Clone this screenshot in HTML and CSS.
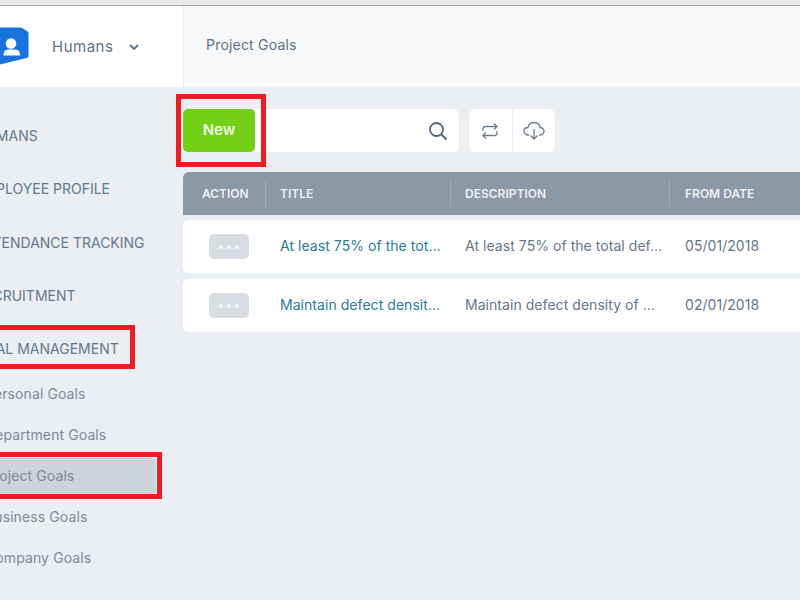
FILE: index.html
```html
<!DOCTYPE html>
<html lang="en">
<head>
<meta charset="utf-8">
<title>Project Goals</title>
<link rel="stylesheet" href="styles.css">
</head>
<body>
<div class="chrome"></div>
<header class="top">
  <div class="brand">
    <svg class="logo" width="30" height="44" viewBox="0 0 30 44"><path d="M0 2.500 H20.500 Q21.500 2.500 22.500 3.200 L27.500 6.500 Q28.500 7.200 28.500 8.500 V31.500 Q28.500 32.500 27.500 32.800 L0 39.500 Z" fill="#1a73dc"/><circle cx="11" cy="18.500" r="5.300" fill="#fff"/><path d="M3.500 30.500 Q3.500 24.500 8 24.500 H15.500 Q20 24.500 20 30.500 Z" fill="#fff"/></svg>
    <span class="brand-name">Humans</span>
    <svg class="chev" width="12" height="8" viewBox="0 0 12 8"><path d="M2 2 L6 6 L10 2" fill="none" stroke="#5d6f80" stroke-width="1.800"/></svg>
  </div>
  <div class="crumb">Project Goals</div>
</header>
<div class="body">
  <nav class="side">
    <a class="sec">HUMANS</a>
    <a class="sec">EMPLOYEE PROFILE</a>
    <a class="sec">ATTENDANCE TRACKING</a>
    <a class="sec">RECRUITMENT</a>
    <a class="sec">GOAL MANAGEMENT</a>
    <a class="sub">Personal Goals</a>
    <a class="sub">Department Goals</a>
    <a class="sub active">Project Goals</a>
    <a class="sub">Business Goals</a>
    <a class="sub">Company Goals</a>
  </nav>
  <main class="main">
    <div class="tools">
      <button class="new">New</button>
      <div class="search">
        <svg width="20" height="20" viewBox="0 0 20 20"><circle cx="8.500" cy="8.500" r="6.500" fill="none" stroke="#54687a" stroke-width="1.800"/><path d="M13.500 13.500 L18.500 18.500" stroke="#54687a" stroke-width="2"/></svg>
      </div>
      <div class="group">
        <span class="ico"><svg width="18" height="18" viewBox="0 0 18 18" fill="none" stroke="#6d7e8e" stroke-width="1.300"><path d="M2 9 V7 Q2 4.500 4.500 4.500 H16 M13 1.500 L16 4.500 L13 7.500"/><path d="M16 9 V11 Q16 13.500 13.500 13.500 H2 M5 10.500 L2 13.500 L5 16.500"/></svg></span>
        <span class="ico"><svg width="22" height="20" viewBox="0 0 22 20" fill="none" stroke="#6d7e8e" stroke-width="1.300"><path d="M6 14 H5 Q1 13.500 1 10 Q1 6.500 5 6.500 Q6 1.500 11 1.500 Q16 1.500 17 6.500 Q21 7 21 10.500 Q21 13.500 17 14 H16"/><path d="M11 8 V18 M7.500 14.500 L11 18 L14.500 14.500"/></svg></span>
      </div>
    </div>
    <div class="head row-grid">
      <div class="th">ACTION</div>
      <div class="th">TITLE</div>
      <div class="th">DESCRIPTION</div>
      <div class="th th-date">FROM DATE</div>
    </div>
    <div class="row row-grid">
      <div class="td"><span class="dots"><i></i><i></i><i></i></span></div>
      <div class="td link">At least 75% of the tot…</div>
      <div class="td">At least 75% of the total def…</div>
      <div class="td date">05/01/2018</div>
    </div>
    <div class="row row-grid">
      <div class="td"><span class="dots"><i></i><i></i><i></i></span></div>
      <div class="td link">Maintain defect densit…</div>
      <div class="td">Maintain defect density of …</div>
      <div class="td date">02/01/2018</div>
    </div>
  </main>
</div>
<div class="mark mark-new"></div>
<div class="mark mark-goal"></div>
<div class="mark mark-proj"></div>
</body>
</html>
```
FILE: styles.css
```css
* { box-sizing: border-box; }
html, body { margin: 0; height: 100%; }
body {
  width: 800px; height: 600px; overflow: hidden; position: relative;
  background: #ebeef2; font-family: Inter, "Open Sans", sans-serif; color: #5d6f80;
}
.chrome { height: 6px; background: #e9e9e9; border-bottom: 1px solid #a8a8a8; }
.top { display: flex; height: 81px; background: #f7f8fa; }
.brand {
  width: 184px; flex: none; background: #fff; border-right: 1px solid #e8ebef;
  display: flex; align-items: center; overflow: hidden;
}
.logo { margin-right: 22px; flex: none; }
.brand-name { font-size: 15px; letter-spacing: .5px; color: #5f7081; }
.chev { margin-left: 15px; }
.crumb { padding-left: 22px; font-size: 14px; letter-spacing: .2px; line-height: 78px; color: #5f7081; }
.body { display: flex; }
.side { width: 183px; flex: none; overflow: hidden; padding-top: 22px; display: flex; flex-direction: column; }
.sec {
  height: 53.300px; line-height: 53px; margin-left: -25px; white-space: nowrap;
  font-size: 14px; color: #66778a;
}
.sub {
  height: 36px; margin-bottom: 5px; line-height: 36px; margin-left: -15px; width: 171px;
  white-space: nowrap; font-size: 14px; letter-spacing: .1px; color: #7d8a96; border-radius: 4px;
}
.sec + .sub { margin-top: 1px; }
.active { background: #ccd3da; }
.main { flex: 1; min-width: 0; padding-top: 22px; }
.tools { display: flex; height: 43px; margin-bottom: 20px; }
.new {
  width: 72px; height: 43px; border: 0; border-radius: 5px; background: #72d116; color: #f4fbe9;
  font: 600 15px Inter, sans-serif; padding-bottom: 3px;
}
.search {
  width: 204px; background: #fff; border-radius: 0 6px 6px 0; margin-right: 10px;
  display: flex; align-items: center; justify-content: flex-end; padding-right: 11px;
}
.group { display: flex; background: #fff; border-radius: 6px; width: 86px; }
.ico { flex: 1; display: flex; align-items: center; justify-content: center; }
.ico + .ico { border-left: 1px solid #e8ebef; }
.row-grid { display: grid; grid-template-columns: 82px 185px 219px 1fr; width: 640px; }
.head { height: 43px; background: #8b98a5; border-radius: 6px 0 0 0; align-items: center; }
.th {
  font-size: 12px; font-weight: 600; color: #eef1f4; height: 26px; line-height: 26px;
  padding-left: 14px; border-left: 1px solid #a3aeb9;
}
.th:first-child { border: 0; padding-left: 19px; }
.th-date { padding-left: 15px; }
.row { height: 53px; background: #fff; border-radius: 6px 0 0 6px; margin-top: 6px; align-items: center; }
.head + .row { margin-top: 5px; }
.td {
  font-size: 14px; letter-spacing: .05px; color: #65768a; padding: 0 0 2px 15px; white-space: nowrap;
}
.td:first-child { padding: 0 0 0 26px; }
.date { padding-left: 16px; }
.link { color: #2a7a9c; }
.dots {
  width: 40px; height: 25px; background: #d8dde4; border-radius: 5px;
  display: flex; align-items: center; justify-content: center; gap: 4px;
}
.dots i { width: 4px; height: 4px; border-radius: 50%; background: #f6f7f9; }
.mark { position: absolute; border: 5px solid #ee1c25; }
.mark-new { left: 176px; top: 94px; width: 90px; height: 73px; }
.mark-goal { left: -10px; top: 325px; width: 145px; height: 44px; }
.mark-proj { left: -10px; top: 452px; width: 172px; height: 47px; }
```
